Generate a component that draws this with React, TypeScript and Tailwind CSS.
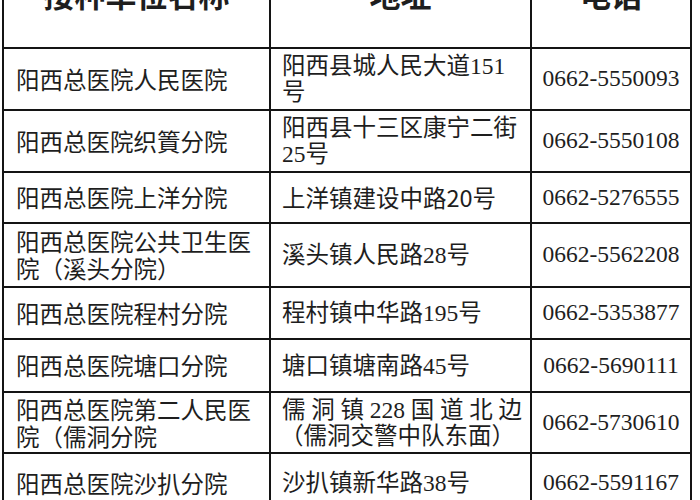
import React from "react";

const sans = "font-['Noto_Sans_CJK_SC',sans-serif]";
const mixed = "font-['Liberation_Serif','Noto_Sans_CJK_SC',serif]";

type Row = { name: React.ReactNode; addr: React.ReactNode; tel: string; h: string };

const rows: Row[] = [
  { name: "阳西总医院人民医院", addr: <>阳西县城人民大道151<br />号</>, tel: "0662-5550093", h: "h-[62px]" },
  { name: "阳西总医院织篢分院", addr: <>阳西县十三区康宁二街<br />25号</>, tel: "0662-5550108", h: "h-[62px]" },
  { name: "阳西总医院上洋分院", addr: <>上洋镇建设中路<span className={sans}>20</span>号</>, tel: "0662-5276555", h: "h-[51px]" },
  { name: <>阳西总医院公共卫生医<br />院（溪头分院）</>, addr: "溪头镇人民路28号", tel: "0662-5562208", h: "h-[64px]" },
  { name: "阳西总医院程村分院", addr: "程村镇中华路195号", tel: "0662-5353877", h: "h-[52px]" },
  { name: "阳西总医院塘口分院", addr: "塘口镇塘南路45号", tel: "0662-5690111", h: "h-[53px]" },
  {
    name: <>阳西总医院第二人民医<br />院（儒洞分院</>,
    addr: (
      <div className="flex flex-col">
        <div className="flex justify-between w-[240px]">
          {["儒", "洞", "镇", "228", "国", "道", "北", "边"].map((t, i) => (
            <span key={i}>{t}</span>
          ))}
        </div>
        <div className="-ml-[2px]">（儒洞交警中队东面）</div>
      </div>
    ),
    tel: "0662-5730610",
    h: "h-[61px]",
  },
  { name: "阳西总医院沙扒分院", addr: "沙扒镇新华路38号", tel: "0662-5591167", h: "h-[60px]" },
];

export default function App() {
  return (
    <div className="w-[700px] h-[500px] overflow-hidden bg-white text-[#1e1e1e]">
      <div className="ml-[2px] mt-[-52px] w-[690px] border-l-2 border-t-2 border-[#141414]">
        <div className="flex h-[99px]">
          <div className={`w-[267px] shrink-0 border-r-2 border-b-2 border-[#141414] flex items-center justify-center pb-[8px] text-[31px] font-bold ${sans}`}>
            接种单位名称
          </div>
          <div className={`w-[261px] shrink-0 border-r-2 border-b-2 border-[#141414] flex items-center justify-center pb-[8px] text-[31px] font-bold ${sans}`}>
            地址
          </div>
          <div className={`w-[160px] shrink-0 border-r-2 border-b-2 border-[#141414] flex items-center justify-center pb-[8px] text-[31px] font-bold ${sans}`}>
            电话
          </div>
        </div>
        {rows.map((r, i) => (
          <div key={i} className={`flex ${r.h}`}>
            <div className={`w-[267px] shrink-0 border-r-2 border-b-2 border-[#141414] flex items-center pl-[12px] text-[23.5px] leading-[27px] ${sans}`}>
              <div>{r.name}</div>
            </div>
            <div className={`w-[261px] shrink-0 border-r-2 border-b-2 border-[#141414] flex items-center pl-[11px] text-[23.5px] leading-[26px] ${mixed}`}>
              <div>{r.addr}</div>
            </div>
            <div className="w-[160px] shrink-0 border-r-2 border-b-2 border-[#141414] flex items-center justify-center text-[23.5px] font-['Liberation_Serif',serif]">
              {r.tel}
            </div>
          </div>
        ))}
      </div>
    </div>
  );
}
